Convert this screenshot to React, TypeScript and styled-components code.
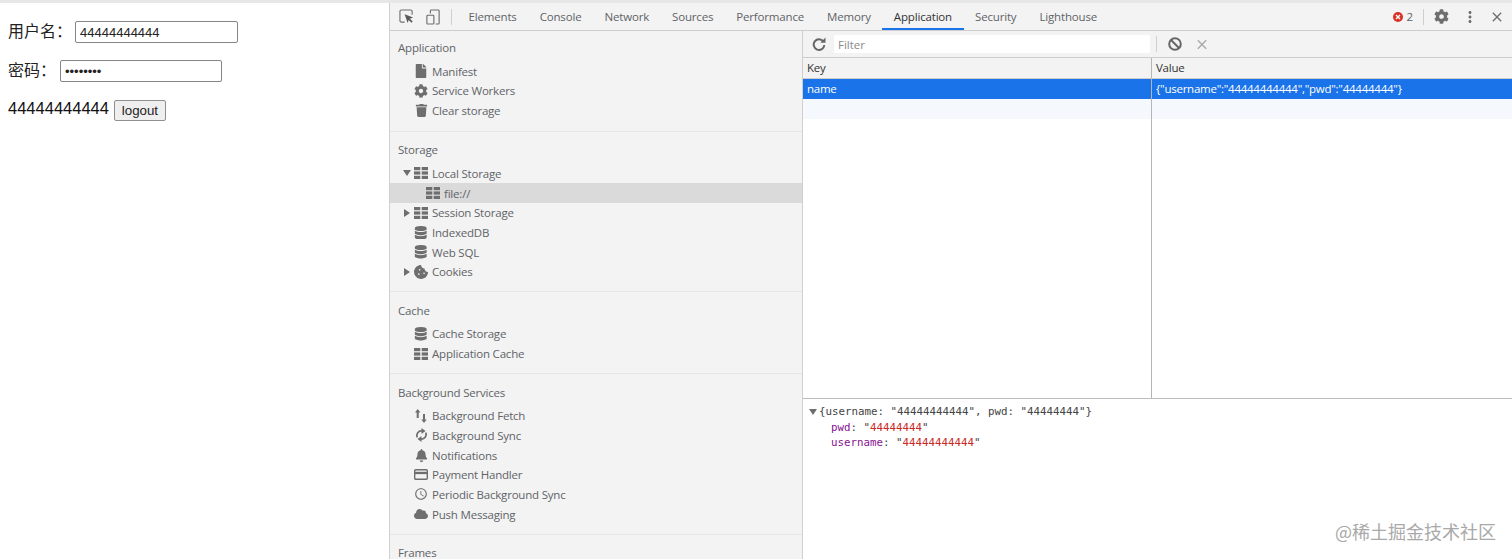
import React from "react";
import styled, { createGlobalStyle } from "styled-components";
import { FaCog, FaTrash, FaDatabase, FaBell, FaCloud, FaCookieBite, FaFile } from "react-icons/fa";
import { MdClose, MdMoreVert, MdAccessTime } from "react-icons/md";

const Global = createGlobalStyle`
  html, body { margin: 0; padding: 0; background: #fff; overflow: hidden; }
  * { box-sizing: border-box; }
`;

const Shell = styled.div`
  width: 1512px;
  height: 559px;
  display: flex;
  overflow: hidden;
  position: relative;
  border-top: 3px solid #e7e7e7;
`;

const Page = styled.div`
  width: 389px;
  flex: none;
  padding: 18px 0 0 8px;
  display: flex;
  flex-direction: column;
  gap: 17px;
  font-family: "Liberation Sans", "Noto Sans CJK SC", sans-serif;
  font-size: 16px;
  color: #222;
`;

const FormRow = styled.div`
  display: flex;
  align-items: center;
  height: 22px;
  white-space: pre;
`;

const FormLabel = styled.span`
  padding-bottom: 4px;
`;

const Field = styled.input<{ $w: number; $ml: number }>`
  width: ${(p) => p.$w}px;
  height: 22px;
  margin-left: ${(p) => p.$ml}px;
  padding: 1px 4px;
  border: 1px solid #858585;
  border-radius: 2px;
  font: 13px "Liberation Sans", sans-serif;
  color: #222;
  background: #fff;
`;

const LogoutRow = styled(FormRow)`
  font-size: 16.5px;
  color: #111;
`;

const LogoutButton = styled.button`
  margin-left: 5px;
  width: 52px;
  height: 21px;
  padding: 0;
  border: 1px solid #8f8f8f;
  border-radius: 2px;
  background: #efefef;
  font: 13.3px "Liberation Sans", sans-serif;
  color: #222;
`;

const Devtools = styled.div`
  flex: 1;
  min-width: 0;
  display: flex;
  flex-direction: column;
  border-left: 1px solid #d0d0d0;
  font-family: "Open Sans", sans-serif;
  font-size: 11.5px;
  letter-spacing: -0.2px;
  color: #5f6368;
`;

const TopBar = styled.div`
  height: 28px;
  flex: none;
  display: flex;
  align-items: center;
  background: #f3f3f3;
  border-bottom: 1px solid #cdcdcd;
  padding: 0 7px 0 9px;
`;

const ToolIcon = styled.span<{ $w: number; $ml?: number; $muted?: boolean }>`
  display: flex;
  align-items: center;
  justify-content: center;
  width: ${(p) => p.$w}px;
  margin-left: ${(p) => p.$ml ?? 0}px;
  height: 27px;
  flex: none;
  color: ${(p) => (p.$muted ? "#a8a8a8" : "#6e6e6e")};
`;

const BarSep = styled.span<{ $ml: number; $mr: number }>`
  width: 1px;
  height: 16px;
  margin: 0 ${(p) => p.$mr}px 0 ${(p) => p.$ml}px;
  background: #cfcfcf;
  flex: none;
`;

const Tabs = styled.div`
  display: flex;
  height: 27px;
  flex: none;
`;

const Tab = styled.div<{ $active?: boolean }>`
  padding: 0 11.5px;
  line-height: 27px;
  white-space: nowrap;
  letter-spacing: -0.17px;
  color: ${(p) => (p.$active ? "#333" : "#5f6368")};
  box-shadow: ${(p) => (p.$active ? "inset 0 -2px 0 #1a73e8" : "none")};
`;

const BarRight = styled.div`
  margin-left: auto;
  display: flex;
  align-items: center;
`;

const ErrorCount = styled.span`
  display: flex;
  align-items: center;
  gap: 4px;
  color: #5f6368;
`;

const ErrorDot = styled.span`
  width: 10px;
  height: 10px;
  border-radius: 50%;
  background: #d93025;
  display: flex;
  align-items: center;
  justify-content: center;
`;

const Body = styled.div`
  flex: 1;
  display: flex;
  min-height: 0;
`;

const Sidebar = styled.div`
  width: 413px;
  flex: none;
  background: #f3f3f3;
  border-right: 1px solid #cfcfcf;
  overflow: hidden;
`;

const Section = styled.div`
  padding: 8.5px 0 9.7px;
  border-bottom: 1px solid #e6e6e6;
  &:first-child { padding: 7px 0 10.7px; }
`;

const SectionTitle = styled.div`
  height: 19.7px;
  line-height: 19.7px;
  padding-left: 8px;
  margin-bottom: 3.5px;
`;

const Row = styled.div<{ $indent?: boolean; $selected?: boolean }>`
  height: 19.7px;
  display: flex;
  align-items: center;
  padding-left: ${(p) => (p.$indent ? 25 : 13)}px;
  background: ${(p) => (p.$selected ? "#dadada" : "transparent")};
  white-space: nowrap;
`;

const ArrowSlot = styled.span`
  width: 11px;
  flex: none;
  display: flex;
  align-items: center;
`;

const Triangle = styled.span<{ $open?: boolean }>`
  width: 0;
  height: 0;
  ${(p) =>
    p.$open
      ? "border-left: 4px solid transparent; border-right: 4px solid transparent; border-top: 6px solid #6e6e6e;"
      : "margin-left: 1px; border-top: 4px solid transparent; border-bottom: 4px solid transparent; border-left: 6px solid #6e6e6e;"}
`;

const IconSlot = styled.span`
  width: 14px;
  height: 14px;
  flex: none;
  margin-right: 4px;
  display: flex;
  align-items: center;
  justify-content: center;
  color: #6e6e6e;
`;

const Main = styled.div`
  flex: 1;
  min-width: 0;
  display: flex;
  flex-direction: column;
  background: #fff;
`;

const StorageBar = styled.div`
  height: 27px;
  flex: none;
  display: flex;
  align-items: center;
  background: #f3f3f3;
  border-bottom: 1px solid #cdcdcd;
`;

const RefreshButton = styled.span`
  width: 31px;
  display: flex;
  justify-content: center;
`;

const FilterInput = styled.input`
  width: 316px;
  height: 18px;
  border: 0;
  padding: 0 4px;
  background: #fff;
  font: 11.5px "Open Sans", sans-serif;
  outline: none;
  &::placeholder { color: #8a8a8a; opacity: 1; }
`;

const TableArea = styled.div`
  height: 341px;
  flex: none;
  display: grid;
  grid-template-columns: 349px 1fr;
  grid-template-rows: 21px 20px 20px 1fr;
  border-bottom: 1px solid #bdbdbd;
`;

const Cell = styled.div<{ $kind: "head" | "sel" | "odd" | "plain" }>`
  padding-left: 4px;
  line-height: ${(p) => (p.$kind === "head" ? 19 : 19)}px;
  white-space: nowrap;
  overflow: hidden;
  letter-spacing: -0.25px;
  color: ${(p) => (p.$kind === "sel" ? "#fff" : "#333")};
  background: ${(p) =>
    p.$kind === "sel" ? "#1a73e8" : p.$kind === "odd" ? "#f5f8fd" : p.$kind === "head" ? "#f3f3f3" : "#fff"};
  border-bottom: ${(p) => (p.$kind === "head" ? "1px solid #cdcdcd" : "0")};
  &:nth-child(odd) { border-right: 1px solid #b5b5b5; }
`;

const Preview = styled.div`
  padding: 5px 0 0 6px;
  font-family: "DejaVu Sans Mono", monospace;
  font-size: 10.8px;
  letter-spacing: 0;
  line-height: 15.7px;
  color: #444;
  white-space: pre;
`;

const PreviewHead = styled.div`
  display: flex;
  align-items: center;
  gap: 2px;
`;

const PreviewLine = styled.div`
  padding-left: 22px;
`;

const PropName = styled.span`
  color: #881391;
`;

const PropValue = styled.span`
  color: #c8281f;
`;

const Watermark = styled.div`
  position: absolute;
  left: 1335px;
  top: 518px;
  font-family: "Noto Sans CJK SC", sans-serif;
  font-size: 18px;
  line-height: 20px;
  color: #a9a9a9;
  white-space: nowrap;
`;

const GridIcon = () => (
  <svg width="14" height="12" viewBox="0 0 14 12" fill="#6e6e6e">
    <rect x="0" y="0" width="6.3" height="3.2" />
    <rect x="7.7" y="0" width="6.3" height="3.2" />
    <rect x="0" y="4.4" width="6.3" height="3.2" />
    <rect x="7.7" y="4.4" width="6.3" height="3.2" />
    <rect x="0" y="8.8" width="6.3" height="3.2" />
    <rect x="7.7" y="8.8" width="6.3" height="3.2" />
  </svg>
);

const FetchIcon = () => (
  <svg width="12" height="14" viewBox="0 0 12 14" fill="#6e6e6e">
    <path d="M2.700 0 5.400 3.400H3.700V9H1.700V3.400H0z" />
    <path d="M9 14 6.300 10.600H8V5h2v5.600h1.700z" />
  </svg>
);

const SyncIcon = () => (
  <svg width="11" height="14" viewBox="0 0 11 14" fill="#6e6e6e">
    <path d="M1.300 9.300A4.500 4.500 0 0 1 6 3" fill="none" stroke="#6e6e6e" strokeWidth="1.700" />
    <path d="M5.500 0l4 3-4 3z" />
    <path d="M9.700 4.700A4.500 4.500 0 0 1 5 11" fill="none" stroke="#6e6e6e" strokeWidth="1.700" />
    <path d="M5.500 14l-4-3 4-3z" />
  </svg>
);

const CardIcon = () => (
  <svg width="14" height="11" viewBox="0 0 14 11" fill="none">
    <rect x="0.700" y="0.700" width="12.600" height="9.600" rx="1" stroke="#6e6e6e" strokeWidth="1.400" />
    <rect x="1" y="2.800" width="12" height="2.300" fill="#6e6e6e" />
  </svg>
);

const RefreshIcon = () => (
  <svg width="14" height="14" viewBox="0 0 14 14" fill="#666">
    <path d="M11.300 4.500A5.300 5.300 0 1 0 12.300 8" fill="none" stroke="#666" strokeWidth="2" />
    <path d="M8.300 5.800H13.500V0.600z" />
  </svg>
);

const InspectIcon = () => (
  <svg width="15" height="15" viewBox="0 0 16 16" fill="none">
    <path d="M6 14H2.500A1.500 1.500 0 0 1 1 12.500v-10A1.500 1.500 0 0 1 2.500 1h10A1.500 1.500 0 0 1 14 2.500V6" stroke="#6e6e6e" strokeWidth="1.200" />
    <path d="M6 5.500 15 9l-3.400 1.400 3 3-1.300 1.300-3-3L9.200 15z" fill="#5a5a5a" />
  </svg>
);

const DeviceIcon = () => (
  <svg width="14" height="16" viewBox="0 0 16 18" fill="none" stroke="#6e6e6e" strokeWidth="1.300">
    <path d="M5 5V2a1 1 0 0 1 1-1h8a1 1 0 0 1 1 1v14a1 1 0 0 1-1 1h-3" />
    <rect x="1" y="7" width="8" height="10" rx="1" />
  </svg>
);

const ErrorX = () => (
  <svg width="6" height="6" viewBox="0 0 6 6" stroke="#fff" strokeWidth="1.400">
    <path d="M1 1l4 4M5 1 1 5" />
  </svg>
);

const BlockIcon = () => (
  <svg width="14" height="14" viewBox="0 0 14 14" fill="none" stroke="#666" strokeWidth="2">
    <circle cx="7" cy="7" r="5.800" />
    <path d="M3 3l8 8" />
  </svg>
);

type Item = { label: string; icon: React.ReactNode; arrow?: "open" | "closed"; indent?: boolean; selected?: boolean };
type Group = { title: string; items: Item[] };

const groups: Group[] = [
  {
    title: "Application",
    items: [
      { label: "Manifest", icon: <FaFile size={14} /> },
      { label: "Service Workers", icon: <FaCog size={14} /> },
      { label: "Clear storage", icon: <FaTrash size={13} /> },
    ],
  },
  {
    title: "Storage",
    items: [
      { label: "Local Storage", icon: <GridIcon />, arrow: "open" },
      { label: "file://", icon: <GridIcon />, indent: true, selected: true },
      { label: "Session Storage", icon: <GridIcon />, arrow: "closed" },
      { label: "IndexedDB", icon: <FaDatabase size={13.5} /> },
      { label: "Web SQL", icon: <FaDatabase size={13.5} /> },
      { label: "Cookies", icon: <FaCookieBite size={14} />, arrow: "closed" },
    ],
  },
  {
    title: "Cache",
    items: [
      { label: "Cache Storage", icon: <FaDatabase size={13.5} /> },
      { label: "Application Cache", icon: <GridIcon /> },
    ],
  },
  {
    title: "Background Services",
    items: [
      { label: "Background Fetch", icon: <FetchIcon /> },
      { label: "Background Sync", icon: <SyncIcon /> },
      { label: "Notifications", icon: <FaBell size={13} /> },
      { label: "Payment Handler", icon: <CardIcon /> },
      { label: "Periodic Background Sync", icon: <MdAccessTime size={16} /> },
      { label: "Push Messaging", icon: <FaCloud size={14} /> },
    ],
  },
  { title: "Frames", items: [] },
];

const tabs = ["Elements", "Console", "Network", "Sources", "Performance", "Memory", "Application", "Security", "Lighthouse"];

export default function App() {
  return (
    <Shell>
      <Global />
      <Page>
        <FormRow>
          <FormLabel>用户名：</FormLabel>
          <Field $w={163} $ml={3} defaultValue="44444444444" />
        </FormRow>
        <FormRow>
          <FormLabel>密码：</FormLabel>
          <Field $w={162} $ml={4} type="password" defaultValue="44444444" />
        </FormRow>
        <LogoutRow>
          <FormLabel>44444444444</FormLabel>
          <LogoutButton>logout</LogoutButton>
        </LogoutRow>
      </Page>
      <Devtools>
        <TopBar>
          <ToolIcon $w={15}><InspectIcon /></ToolIcon>
          <ToolIcon $w={14} $ml={12}><DeviceIcon /></ToolIcon>
          <BarSep $ml={11} $mr={5} />
          <Tabs>
            {tabs.map((t) => (
              <Tab key={t} $active={t === "Application"}>{t}</Tab>
            ))}
          </Tabs>
          <BarRight>
            <ErrorCount>
              <ErrorDot><ErrorX /></ErrorDot>2
            </ErrorCount>
            <BarSep $ml={10} $mr={9} />
            <ToolIcon $w={16}><FaCog size={15} /></ToolIcon>
            <ToolIcon $w={18} $ml={12}><MdMoreVert size={20} /></ToolIcon>
            <ToolIcon $w={16} $ml={10}><MdClose size={18} /></ToolIcon>
          </BarRight>
        </TopBar>
        <Body>
          <Sidebar>
            {groups.map((g) => (
              <Section key={g.title}>
                <SectionTitle>{g.title}</SectionTitle>
                {g.items.map((it) => (
                  <Row key={it.label} $indent={it.indent} $selected={it.selected}>
                    <ArrowSlot>{it.arrow && <Triangle $open={it.arrow === "open"} />}</ArrowSlot>
                    <IconSlot>{it.icon}</IconSlot>
                    {it.label}
                  </Row>
                ))}
              </Section>
            ))}
          </Sidebar>
          <Main>
            <StorageBar>
              <RefreshButton><RefreshIcon /></RefreshButton>
              <FilterInput placeholder="Filter" />
              <BarSep $ml={6} $mr={6} />
              <ToolIcon $w={24}><BlockIcon /></ToolIcon>
              <ToolIcon $w={16} $ml={7} $muted><MdClose size={17} /></ToolIcon>
            </StorageBar>
            <TableArea>
              <Cell $kind="head">Key</Cell>
              <Cell $kind="head">Value</Cell>
              <Cell $kind="sel">name</Cell>
              <Cell $kind="sel">{'{"username":"44444444444","pwd":"44444444"}'}</Cell>
              <Cell $kind="odd" />
              <Cell $kind="odd" />
              <Cell $kind="plain" />
              <Cell $kind="plain" />
            </TableArea>
            <Preview>
              <PreviewHead>
                <Triangle $open />
                {'{username: "44444444444", pwd: "44444444"}'}
              </PreviewHead>
              <PreviewLine>
                <PropName>pwd</PropName>: "<PropValue>44444444</PropValue>"
              </PreviewLine>
              <PreviewLine>
                <PropName>username</PropName>: "<PropValue>44444444444</PropValue>"
              </PreviewLine>
            </Preview>
          </Main>
        </Body>
      </Devtools>
      <Watermark>@稀土掘金技术社区</Watermark>
    </Shell>
  );
}
